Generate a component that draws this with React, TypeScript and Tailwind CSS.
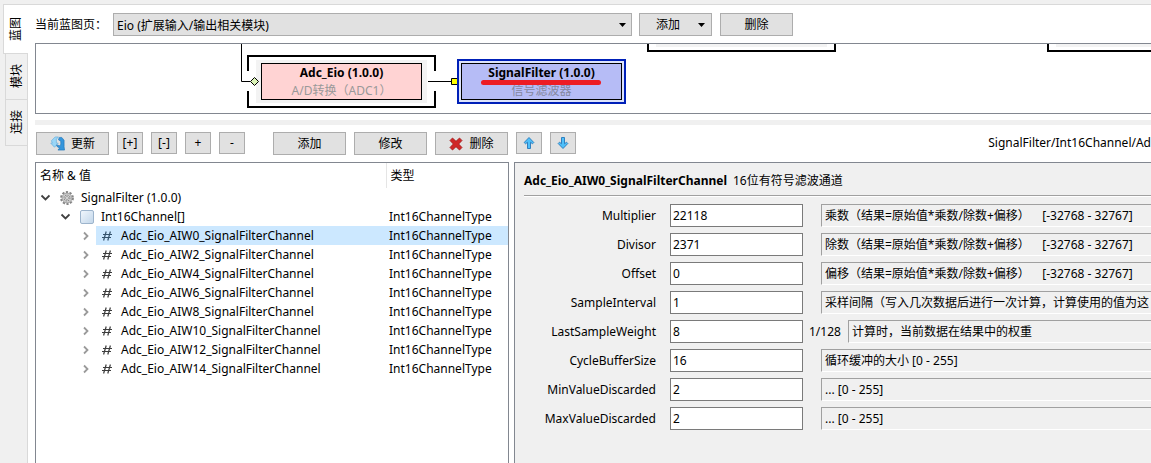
import type { ReactNode } from "react";
import clsx from "clsx";

const FIELDS = [
  { name: "Multiplier", value: "22118", note: "乘数（结果=原始值*乘数/除数+偏移）\u00a0\u00a0\u00a0 [-32768 - 32767]" },
  { name: "Divisor", value: "2371", note: "除数（结果=原始值*乘数/除数+偏移）\u00a0\u00a0\u00a0 [-32768 - 32767]" },
  { name: "Offset", value: "0", note: "偏移（结果=原始值*乘数/除数+偏移）\u00a0\u00a0\u00a0 [-32768 - 32767]" },
  { name: "SampleInterval", value: "1", note: "采样间隔（写入几次数据后进行一次计算，计算使用的值为这" },
  { name: "LastSampleWeight", value: "8", unit: "1/128", note: "计算时，当前数据在结果中的权重" },
  { name: "CycleBufferSize", value: "16", note: "循环缓冲的大小 [0 - 255]" },
  { name: "MinValueDiscarded", value: "2", note: "... [0 - 255]" },
  { name: "MaxValueDiscarded", value: "2", note: "... [0 - 255]" },
];

const CHANNELS = [0, 2, 4, 6, 8, 10, 12, 14];

const TABS = ["蓝图", "模块", "连接"];

function RefreshIcon() {
  return (
    <svg width="15" height="15" viewBox="0 0 16 16">
      <path d="M1.500 5 5.500 1H9l-2.200 2.400v4.200h2L4.800 12 .8 7.600h1.700z" fill="#9ad6f7" stroke="#62aede" strokeWidth=".7" />
      <path d="M10 1.500h2.500L15 4.500v7l.5 3.500H8.500l2-2.500C8.500 12.500 7 11 7 9.500l3 .8c1 0 1.500-.8 1.500-2V5.500L9 4z" fill="#3596dc" stroke="#2276b8" strokeWidth=".7" />
    </svg>
  );
}

function CrossIcon() {
  return (
    <svg width="14" height="14" viewBox="0 0 14 14">
      <path d="M3.500 1 7 4.300 10.500 1 13 3.500 9.700 7 13 10.500 10.500 13 7 9.700 3.500 13 1 10.500 4.300 7 1 3.500z" fill="#d02828" stroke="#a01818" strokeWidth=".8" />
    </svg>
  );
}

function ArrowIcon({ down }: { down?: boolean }) {
  return (
    <svg width="12" height="14" viewBox="0 0 12 14" className={clsx(down && "rotate-180")}>
      <path d="M6 1.500 10.800 6.500 9.500 7.800 7.500 6.200V12.500H4.500V6.200L2.500 7.800 1.200 6.500z" fill="#4fc0fa" stroke="#2f80c0" strokeLinejoin="round" />
    </svg>
  );
}

function GearIcon() {
  return (
    <svg width="14" height="14" viewBox="0 0 14 14">
      <circle cx="7" cy="7" r="5.900" fill="none" stroke="#858585" strokeWidth="2" strokeDasharray="2.200 1.507" />
      <circle cx="7" cy="7" r="4.900" fill="#d4d4d4" stroke="#989898" strokeWidth=".9" />
      <circle cx="7" cy="7" r="3" fill="none" stroke="#8c8c8c" strokeWidth="1.200" strokeDasharray="1.400 .956" />
      <circle cx="7" cy="7" r="1.400" fill="#fff" stroke="#888" strokeWidth=".8" />
    </svg>
  );
}

function HashIcon({ active }: { active?: boolean }) {
  return (
    <svg width="12" height="12" viewBox="0 0 12 12" fill="none" stroke={active ? "#34526c" : "#3c3c3c"} strokeWidth="1.200">
      <path d="M5.200 1.500 2.600 10.500M9.400 1.500l-2.600 9M2 4.500h9M1 7.500h9" />
    </svg>
  );
}

function Chevron({ open }: { open?: boolean }) {
  return (
    <svg width="10" height="10" viewBox="0 0 10 10" fill="none" stroke={open ? "#404040" : "#9a9a9a"} strokeWidth="1.800" className="shrink-0">
      <path d={open ? "M1.500 2.500l4 4 4-4" : "M4 1.500l3.500 3.500-3.500 3.500"} />
    </svg>
  );
}

function Caret() {
  return (
    <svg width="7" height="4" viewBox="0 0 7 4">
      <path d="M0 0h7L3.500 4z" />
    </svg>
  );
}

function ToolButton({ children, small, label }: { children: ReactNode; small?: boolean; label?: string }) {
  return (
    <button
      type="button"
      aria-label={label}
      className={clsx(
        "flex shrink-0 items-center justify-center gap-1.5 border border-[#adadad] bg-[#e1e1e1]",
        small ? "h-[22px] w-[26px]" : "h-[23px] w-[73px]"
      )}
    >
      {children}
    </button>
  );
}

function Blueprint() {
  return (
    <div className="relative h-[71px] overflow-hidden border-y border-l border-[#828790] bg-white">
      <div className="absolute -top-8 left-[611px] h-10 w-[189px] border-2 border-black bg-white">
        <div className="mx-[7px] h-[33px] bg-[#f3f3f3]" />
      </div>
      <div className="absolute -top-8 left-[1011px] h-10 w-[189px] border-2 border-black bg-white">
        <div className="mx-[7px] h-[33px] bg-[#f3f3f3]" />
      </div>
      <div className="absolute top-4 left-[220px] h-[43px] w-[171px] bg-[#f3f3f3] px-[5px] py-[3px]">
        <div className="h-[37px] border border-black bg-[#ffd3d3] text-center leading-[18px]">
          <div className="font-bold">Adc_Eio (1.0.0)</div>
          <div className="text-[#999]">A/D转换（ADC1）</div>
        </div>
      </div>
      {/* wires, frame and ports */}
      <svg className="absolute top-0 left-0" width="440" height="69" fill="none" stroke="#000">
        <path d="M205.500 0v37.500h9M392 37.500h24" />
        <path d="M212 27V12h187v15M212 47v16h187V47" strokeWidth="2" />
        <path d="M218.500 33.500l4 4-4 4-4-4z" fill="#dcf5b8" />
        <path d="M415.500 34.500h6v6h-6z" fill="#ff0" />
      </svg>
      <div className="absolute top-[15px] left-[421px] h-[45px] w-[169px] border-2 border-[#0020b8] bg-[#dde3fb] p-0.5">
        <div className="h-[37px] border border-black bg-[#b6bcf6] text-center leading-[18px]">
          <div className="font-bold">SignalFilter (1.0.0)</div>
          <div className="text-[#8487a0]">信号滤波器</div>
        </div>
      </div>
      <div className="absolute top-[36px] left-[445px] h-[5px] w-[120px] rounded-full bg-[#ed1c24]" />
    </div>
  );
}

function ChannelTree() {
  return (
    <div className="w-[474px] shrink-0 border-x border-t border-[#828790] bg-white">
      <table className="w-full table-fixed border-collapse">
        <thead>
          <tr className="h-[25px] text-left">
            <th className="w-[350px] border-r border-[#e5e5e5] pl-1 font-normal">名称 &amp; 值</th>
            <th className="pl-1 font-normal">类型</th>
          </tr>
        </thead>
        <tbody>
          <tr className="h-[19px]">
            <td className="p-0">
              <div className="flex h-[19px] items-center gap-2 pl-1">
                <Chevron open />
                <span className="flex items-center gap-[7px] pl-0.5">
                  <GearIcon />
                  SignalFilter (1.0.0)
                </span>
              </div>
            </td>
            <td />
          </tr>
          <tr className="h-[19px]">
            <td className="p-0">
              <div className="flex h-[19px] items-center gap-2 pl-6">
                <Chevron open />
                <span className="flex items-center gap-[7px] pl-0.5">
                  <span className="size-3.5 rounded-xs border border-[#9db4cc] bg-linear-to-br from-[#f0f6fc] to-[#c3d7ea]" />
                  Int16Channel[]
                </span>
              </div>
            </td>
            <td className="p-0 pl-[3px]">Int16ChannelType</td>
          </tr>
          {CHANNELS.map((n, i) => (
            <tr key={n} className="h-[19px]">
              <td className="p-0">
                <div className="flex h-[19px] items-center gap-1.5 pl-11">
                  <Chevron />
                  <span className={clsx("flex h-full flex-1 items-center gap-2 pl-[5px]", i === 0 && "bg-[#cce8ff]")}>
                    <HashIcon active={i === 0} />
                    Adc_Eio_AIW{n}_SignalFilterChannel
                  </span>
                </div>
              </td>
              <td className={clsx("p-0 pl-[3px]", i === 0 && "bg-[#cce8ff]")}>Int16ChannelType</td>
            </tr>
          ))}
        </tbody>
      </table>
    </div>
  );
}

function ChannelForm() {
  return (
    <form className="min-w-0 flex-1 overflow-hidden border-t border-l border-[#828790] bg-[#f0f0f0] pl-[9px]">
      <h2 className="flex h-[33px] items-center gap-1.5 border-b border-[#a0a0a0] pt-1 whitespace-nowrap">
        <b>Adc_Eio_AIW0_SignalFilterChannel</b>
        16位有符号滤波通道
      </h2>
      <div className="flex flex-col gap-1.5 border-t border-white pt-[7px]">
        {FIELDS.map((field) => (
          <div key={field.name} className="flex h-[23px] items-center whitespace-nowrap">
            <label htmlFor={field.name} className="w-[132px] shrink-0 text-right">
              {field.name}
            </label>
            <input
              id={field.name}
              defaultValue={field.value}
              className="ml-3.5 h-[23px] w-[133px] shrink-0 border border-[#7a7a7a] bg-white px-0.5 outline-none"
            />
            <span className={clsx("shrink-0", field.unit ? "w-[45px] pl-1.5" : "w-[18px]")}>{field.unit}</span>
            <div className="h-[23px] min-w-0 flex-1 overflow-hidden border-t border-b border-l border-[#a0a0a0] border-b-white pl-[3px] leading-[21px]">
              {field.note}
            </div>
          </div>
        ))}
      </div>
    </form>
  );
}

export default function App() {
  return (
    <div className="flex min-h-screen bg-[#f0f0f0] pt-1 font-['Noto_Sans','Noto_Sans_CJK_SC',sans-serif] text-xs leading-4 text-black">
      <div role="tablist" className="z-10 flex w-7 shrink-0 flex-col items-end">
        {TABS.map((tab, i) => (
          <button
            key={tab}
            type="button"
            role="tab"
            aria-selected={i === 0}
            className={clsx(
              "flex items-center justify-center border-[#d9d9d9]",
              i === 0 ? "h-[50px] w-[25px] border-y border-l bg-white" : "h-[46px] w-[23px] border-x border-b"
            )}
          >
            <span className="rotate-180 [writing-mode:vertical-rl]">
              <span className="[text-orientation:sideways]">{tab}</span>
            </span>
          </button>
        ))}
      </div>
      <main className="-ml-px flex min-w-0 flex-1 flex-col border-t border-l border-[#d9d9d9] bg-white pl-[7px]">
        <div className="flex h-[38px] items-start pt-2 leading-[23px]">
          <label htmlFor="page" className="w-[78px] shrink-0">当前蓝图页：</label>
          <div className="relative w-[519px]">
            <select id="page" className="block h-[23px] w-full appearance-none border border-[#adadad] bg-[#e1e1e1] px-[3px] outline-none">
              <option>Eio (扩展输入/输出相关模块)</option>
            </select>
            <span className="pointer-events-none absolute inset-y-0 right-1.5 flex items-center">
              <Caret />
            </span>
          </div>
          <button type="button" className="ml-[7px] flex h-[23px] w-[73px] items-center justify-between border border-[#adadad] bg-[#e1e1e1] pr-1.5 pl-4">
            添加
            <Caret />
          </button>
          <div className="ml-2">
            <ToolButton>删除</ToolButton>
          </div>
        </div>
        <Blueprint />
        <div className="mt-1.5 h-[5px] bg-[#f0f0f0]" />
        <div className="flex h-[37px] items-start gap-2 overflow-hidden pt-[7px] pl-px whitespace-nowrap">
          <ToolButton><RefreshIcon />更新</ToolButton>
          <ToolButton small>[+]</ToolButton>
          <ToolButton small>[-]</ToolButton>
          <ToolButton small>+</ToolButton>
          <ToolButton small>-</ToolButton>
          <div className="ml-5">
            <ToolButton>添加</ToolButton>
          </div>
          <ToolButton>修改</ToolButton>
          <ToolButton><CrossIcon />删除</ToolButton>
          <ToolButton small label="上移"><ArrowIcon /></ToolButton>
          <ToolButton small label="下移"><ArrowIcon down /></ToolButton>
          <div className="ml-auto shrink-0 pt-[3px]">SignalFilter/Int16Channel/Ad</div>
        </div>
        <div className="flex flex-1 gap-[5px]">
          <ChannelTree />
          <ChannelForm />
        </div>
      </main>
    </div>
  );
}
